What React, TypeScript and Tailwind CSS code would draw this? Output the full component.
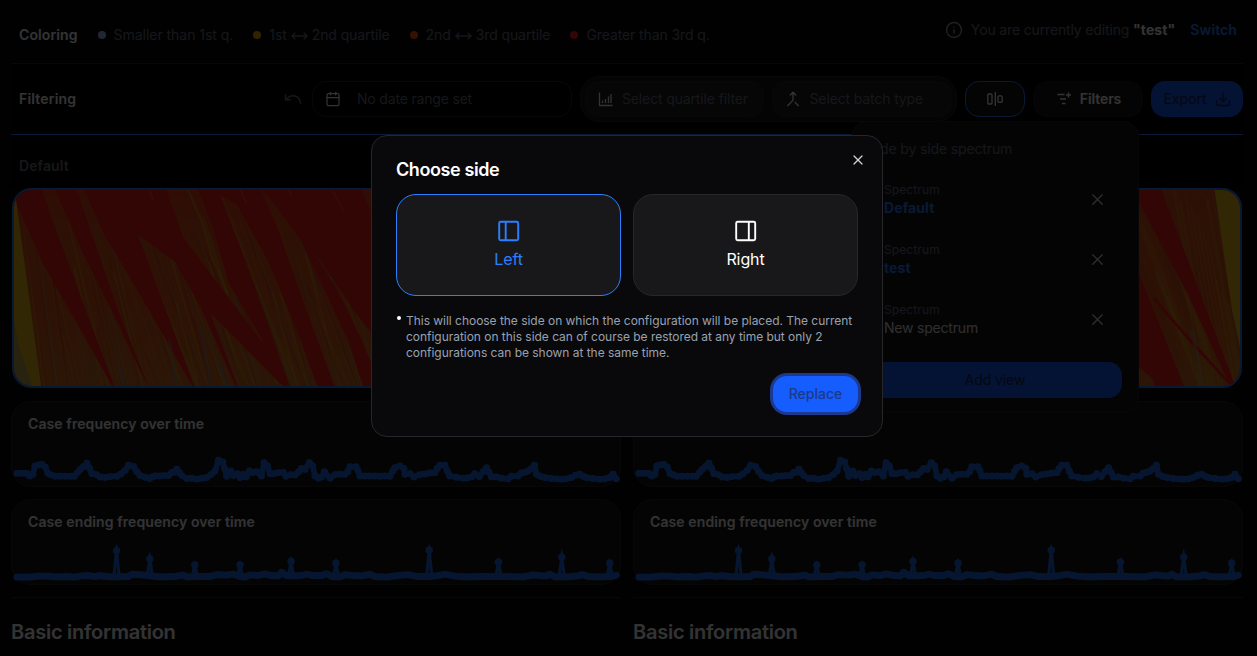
import React from "react";
import { Calendar, Info, Merge, Undo, X } from "lucide-react";

const frequency =
  "50,237 62,237 75,237 80,237 88,245 98,240 104,214 115,211 125,210 135,218 143,237 153,242 165,246 180,246 195,246 210,246 222,246 232,234 240,225 250,216 260,206 268,222 275,238 288,241 300,248 315,250 330,247 350,246 362,239 375,228 385,212 400,216 410,232 420,244 435,249 448,253 456,248 465,245 478,245 490,244 505,244 515,234 522,234 530,224 538,236 545,244 560,253 575,252 590,255 605,252 620,250 633,241 645,230 655,197 668,202 673,222 680,246 692,230 700,244 712,238 720,250 730,240 738,248 748,230 758,235 770,232 784,245 792,204 802,214 810,238 822,238 835,235 850,234 858,246 872,241 885,242 895,233 905,222 915,225 928,204 938,214 945,245 955,252 965,248 973,232 990,252 1005,241 1020,240 1035,240 1043,232 1050,217 1068,217 1074,229 1080,245 1095,245 1110,245 1125,245 1140,246 1155,245 1170,246 1178,231 1185,220 1200,214 1212,222 1215,240 1230,238 1242,248 1260,241 1275,239 1290,236 1305,235 1312,222 1320,212 1335,212 1342,230 1350,245 1370,249 1390,252 1402,251 1415,248 1425,238 1438,247 1450,232 1460,220 1468,234 1475,248 1490,248 1505,252 1525,254 1535,246 1555,245 1565,236 1575,234 1585,230 1595,222 1604,212 1610,240 1622,246 1635,250 1655,253 1670,254 1685,255 1700,254 1715,250 1728,243 1740,240 1750,246 1760,250 1780,253 1800,255 1815,254 1830,250 1840,240 1850,254";

const spikes: [number, number, number][] = [
  [349, 467, 445],
  [449, 493, 468],
  [584, 511, 496],
  [720, 511, 496],
  [873, 500, 483],
  [1008, 506, 489],
  [1288, 466, 445],
  [1496, 503, 486],
  [1686, 487, 460],
  [1830, 506, 489],
];

const baseline =
  "50,549 85,549 115,546 140,546 165,548 200,547 222,549 245,545 265,544 285,547 297,544 320,547 340,548 385,547 395,540 425,542 450,545 480,548 520,547 548,543 560,548 600,547 630,547 650,541 680,543 700,540 720,547 735,549 750,542 775,544 792,539 815,544 835,545 845,534 858,544 875,545 905,544 920,540 940,544 965,544 980,538 995,547 1020,548 1035,541 1060,544 1085,545 1108,540 1125,547 1160,549 1190,544 1225,541 1250,547 1285,547 1310,545 1335,540 1365,546 1400,548 1450,547 1500,547 1570,548 1600,542 1620,544 1640,546 1650,540 1665,548 1700,548 1735,545 1748,541 1765,547 1800,548 1835,547 1850,543";

function Chart({ title, kind }: { title: string; kind: "line" | "spikes" }) {
  return (
    <div className="relative h-[86px] flex-1 rounded-[20px] border border-zinc-800 bg-zinc-900 px-4 pt-3">
      <h3 className="text-sm leading-5 font-semibold tracking-[0.1px] text-white">{title}</h3>
      {kind === "line" ? (
        <svg className="absolute inset-0 h-full w-full" viewBox="35 18 1826 258" preserveAspectRatio="none">
          <polyline points={frequency} fill="none" stroke="#2571ee" strokeWidth="17" strokeLinejoin="round" strokeLinecap="round" />
          {frequency.split(" ").map((p, i) => (
            <circle key={i} cx={p.split(",")[0]} cy={p.split(",")[1]} r="10.5" fill="#2571ee" />
          ))}
        </svg>
      ) : (
        <svg className="absolute inset-0 h-full w-full" viewBox="35 312 1826 258" preserveAspectRatio="none">
          <polyline points={baseline} fill="none" stroke="#2571ee" strokeWidth="21" strokeLinejoin="round" strokeLinecap="round" />
          {spikes.map(([x, y, tip]) => (
            <g key={x} fill="#2571ee">
              <path d={`M${x - 8} 547L${x} ${y}L${x + 8} 547`} fill="none" stroke="#2571ee" strokeWidth="9" />
              <path d={`M${x} ${tip}L${x + 6} ${y}H${x - 6}Z`} />
              <circle cx={x} cy={y} r="11" />
            </g>
          ))}
        </svg>
      )}
    </div>
  );
}

const leftBands = [
  "16,203 42,262 113,388 42,388",
  "41,188 54,188 82,252 116,320 148,388 115,388 82,300",
  "76,188 83,188 104,235 133,283 193,388 149,388 118,310",
  "138,235 175,262 200,307 236,388 195,388",
  "210,313 284,388 238,388",
  "165,188 197,188 213,230 228,283 240,303 264,344 230,300 183,237",
  "220,196 236,204 267,260 300,340 317,388 290,388 245,260",
  "260,188 273,203 300,240 327,297 347,340 363,388 335,388 307,313 278,230",
  "310,247 333,280 353,310 376,340 376,376 360,337 337,290",
  "360,188 380,188 380,232",
];

const rightBands = [
  "1161,188 1215,188 1242,350 1242,388 1236,388",
  "1139,202 1187,293 1231,388 1185,388 1139,272",
  "1139,368 1152,378 1156,388 1139,388",
];

// [x at the top, y at the top, x at the bottom, y at the bottom, colour, opacity, width]
type Streak = [number, number, number, number, string, number, number];

const leftStreaks: Streak[] = Array.from({ length: 190 }, (_, i) => {
  const x = 18 + ((i * 67) % 351);
  const y = 192 + ((i * 43) % 160);
  const slope = x < 50 ? 0.14 : x < 110 ? 0.24 : 0.26 + ((i * 7) % 5) * 0.04;
  const colors = ["#e8b020", "#d01818", "#d9a81c", "#f02a1e", "#8f9a72", "#e0641e"];
  return [x, y, x + (388 - y) * slope, 388, colors[i % 6], 0.2 + (i % 3) * 0.09, 1 + (i % 3) * 0.7];
});

const rightStreaks: Streak[] = Array.from({ length: 56 }, (_, i) => {
  const x = 1125 + ((i * 29) % 114);
  const y = 188 + ((i * 41) % 120);
  const colors = ["#e8b020", "#c8541e", "#d6a51c"];
  return [x, y, x + (388 - y) * (x > 1170 ? 0.18 : 0.38), 388, colors[i % 3], 0.3, 1 + (i % 3)];
});

function Spectrum({ side }: { side: "left" | "right" }) {
  const left = side === "left";
  const bands = left ? leftBands : rightBands;
  const streaks = left ? leftStreaks : rightStreaks;
  return (
    <div className="h-[200px] flex-1 overflow-hidden rounded-[20px] border-2 border-blue-500">
      <svg className="h-full w-full" viewBox={left ? "14 190 604 196" : "636 190 604 196"} preserveAspectRatio="none">
        <defs>
          <clipPath id={`bands-${side}`}>
            {bands.map((b) => (
              <polygon key={b} points={b} />
            ))}
          </clipPath>
          <linearGradient id={`fade-${side}`} x1="0" y1="0" x2="0" y2="1">
            <stop offset="0" stopColor="#ff2020" stopOpacity={left ? "0.45" : "0.1"} />
            <stop offset="0.45" stopColor="#d7681f" stopOpacity="0" />
            <stop offset="1" stopColor="#c8a030" stopOpacity="0.35" />
          </linearGradient>
          <filter id={`soft-${side}`}>
            <feGaussianBlur stdDeviation="0.6" />
          </filter>
        </defs>
        <rect x="0" y="180" width="1257" height="220" fill="#ff2020" />
        <g filter={`url(#soft-${side})`}>
          <g clipPath={`url(#bands-${side})`}>
            <rect x="0" y="180" width="1257" height="220" fill="#e0561c" />
            {streaks.map(([x1, y1, x2, y2, c, o, w], i) => (
              <line key={i} x1={x1} y1={y1} x2={x2} y2={y2} stroke={c} strokeOpacity={o} strokeWidth={w} />
            ))}
            <rect x="0" y="188" width="1257" height="200" fill={`url(#fade-${side})`} />
          </g>
        </g>
        {left ? (
          <g filter="url(#soft-left)">
            <polygon points="10,198 16,200 42,392 10,392" fill="#f2c31c" />
            <polygon points="10,300 20,350 34,392 10,392" fill="#7d93a0" opacity="0.4" />
            <path d="M188 190L203 225L212 258L228 295" stroke="#d9a51f" strokeWidth="2" opacity="0.6" fill="none" />
            <path d="M169 340L176 386M200 325L211 386M218 360L226 386M118 365L124 388" stroke="#8290a0" strokeWidth="3" opacity="0.45" fill="none" />
            <path d="M331 188L343 212M240 190L246 203M288 190L291 195M149 190L153 200" stroke="#d9a51f" opacity="0.5" fill="none" />
          </g>
        ) : (
          <g filter="url(#soft-right)">
            <polygon points="1214,186 1246,186 1246,375 1232,310" fill="#f2c31c" />
            <path d="M1154 298Q1180 330 1232 386" stroke="#ff2020" strokeWidth="3" fill="none" />
            <path d="M1192 330L1203 386" stroke="#a09a88" strokeWidth="4" opacity="0.4" />
          </g>
        )}
      </svg>
    </div>
  );
}

function Legend({ color, children }: { color: string; children: React.ReactNode }) {
  return (
    <span className="flex items-center gap-2 whitespace-nowrap">
      <i className={`size-2 rounded-full ${color}`} />
      <span>{children}</span>
    </span>
  );
}

function BothWays() {
  return (
    <svg className="mx-1 -mt-px inline-block h-3 w-[17px]" viewBox="0 0 18 12" fill="none" stroke="currentColor" strokeWidth="1.4">
      <path d="M1 6h16M4.500 2.500L1 6l3.500 3.500M13.500 2.500L17 6l-3.500 3.500" />
    </svg>
  );
}

function ViewRow({ name, active }: { name: string; active?: boolean }) {
  return (
    <div className="flex h-[60px] items-center justify-between pr-[15px] pb-px pl-4">
      <div className="pt-px">
        <div className="text-xs leading-4 tracking-[0.1px] text-gray-500">Spectrum</div>
        <div className={active ? "text-sm leading-5 font-bold tracking-[0.1px] text-blue-500" : "text-sm leading-5 tracking-[-0.2px] text-zinc-200"}>{name}</div>
      </div>
      <X className="size-[19px] text-zinc-200" strokeWidth={1.6} />
    </div>
  );
}

export default function App() {
  return (
    <div className="relative h-[656px] w-full overflow-hidden bg-zinc-950 font-['Inter',sans-serif] text-sm text-white">
      <div className="mr-[14px] ml-[11px]">
        <header className="flex h-16 items-center border-b border-zinc-800 pl-2 text-gray-500">
          <div className="flex items-center pt-[7px]">
            <b className="mr-5 font-semibold tracking-[0.1px] text-white">Coloring</b>
            <div className="flex gap-5 tracking-[-0.1px]">
              <Legend color="bg-[#a0c4ff]"><span className="tracking-[-0.03px]">Smaller than 1st q.</span></Legend>
              <Legend color="bg-[#f0b100]">1st<BothWays />2nd quartile</Legend>
              <Legend color="bg-[#ff5a10]">2nd<BothWays />3rd quartile</Legend>
              <Legend color="bg-[#fb1c24]">Greater than 3rd q.</Legend>
            </div>
          </div>
          <div className="ml-auto flex items-center pr-[6px] pb-[4px]">
            <Info className="mr-2 size-[18px] text-zinc-400" strokeWidth={1.9} />
            <span className="tracking-[-0.15px]">You are currently editing <b className="font-bold tracking-[0.1px] text-white">"test"</b></span>
            <b className="ml-[15px] font-semibold tracking-[0.1px] text-blue-500">Switch</b>
          </div>
        </header>

        <section className="flex h-[71px] items-center border-b border-blue-500 bg-black pl-2">
          <b className="font-semibold tracking-[0.2px]">Filtering</b>
          <Undo className="mr-[9px] ml-auto size-5 text-gray-500" strokeWidth={1.8} />
          <div className="mr-2 flex h-9 w-[260px] items-center gap-4 rounded-[14px] border border-zinc-800 pl-3 tracking-[-0.18px] text-gray-500">
            <Calendar className="size-4 text-white" strokeWidth={1.8} />
            No date range set
          </div>
          <div className="mr-2 flex h-[46px] w-[377px] items-center gap-2 rounded-[20px] border border-zinc-800 bg-zinc-900 px-1 tracking-[-0.14px] text-gray-500">
            <div className="flex h-9 w-[180px] items-center gap-2 rounded-[14px] border border-zinc-800 bg-zinc-800/40 pl-3">
              <svg className="size-4 text-white" viewBox="0 0 16 16" fill="none" stroke="currentColor" strokeWidth="1.3">
                <path d="M1.500 1.500v13h13M4.500 12V9.500M7.500 12V8M10.500 12V5.500M13 12V3" />
              </svg>
              Select quartile filter
            </div>
            <div className="flex h-9 w-[182px] items-center gap-[9px] rounded-[14px] border border-zinc-800 bg-zinc-800/40 pl-3">
              <Merge className="size-4 text-white" strokeWidth={2} />
              Select batch type
            </div>
          </div>
          <div className="mr-2 flex h-9 w-[60px] items-center justify-center rounded-[14px] border border-blue-500 bg-zinc-900">
            <svg className="size-4" viewBox="0 0 16 16" fill="none" stroke="currentColor" strokeWidth="1.3">
              <rect x="0.800" y="3" width="4.200" height="10" rx="1" />
              <path d="M8.300 1v14" />
              <rect x="11" y="4.800" width="4.200" height="6.500" rx="1" />
            </svg>
          </div>
          <div className="mr-2 flex h-9 w-[110px] items-center justify-center gap-2 rounded-[14px] bg-zinc-900 pl-px font-semibold tracking-[-0.1px]">
            <svg className="size-4" viewBox="0 0 16 16" fill="none" stroke="currentColor" strokeWidth="1.4">
              <path d="M1.500 3.500h7M4 8h6M6 12.500h3.500M12.500 1.500v5M10 4h5" />
            </svg>
            Filters
          </div>
          <div className="flex h-9 w-[92px] items-center justify-center gap-2 rounded-[14px] bg-blue-600 text-blue-950">
            <span>Export</span>
            <svg className="size-4" viewBox="0 0 16 16" fill="none" stroke="currentColor" strokeWidth="1.3">
              <path d="M8 1v9M4.500 7L8 10.500 11.500 7M1.500 9v3.500a2 2 0 0 0 2 2h9a2 2 0 0 0 2-2V9" />
            </svg>
          </div>
        </section>

        <div className="flex h-[53px] items-center bg-black pt-2 pl-2 font-semibold tracking-[0.1px] text-zinc-500">Default</div>
        <div className="flex gap-3 pr-px pl-px">
          <Spectrum side="left" />
          <Spectrum side="right" />
        </div>
        <div className="mt-[13px] flex gap-3">
          <Chart title="Case frequency over time" kind="line" />
          <Chart title="Case frequency over time" kind="line" />
        </div>
        <div className="mt-3 flex gap-3">
          <Chart title="Case ending frequency over time" kind="spikes" />
          <Chart title="Case ending frequency over time" kind="spikes" />
        </div>
        <div className="mt-3 flex gap-3 text-xl font-semibold tracking-[-0.25px]">
          <h2 className="flex-1 border-t border-zinc-800 pt-5">Basic information</h2>
          <h2 className="flex-1 border-t border-zinc-800 pt-5">Basic information</h2>
        </div>
      </div>

      <div className="absolute top-[121px] left-[851px] h-[292px] w-[288px] rounded-[16px] border border-zinc-800 bg-zinc-900 px-4">
        <div className="flex h-[48px] items-center pt-[5px] tracking-[-0.14px] text-gray-500">Side by side spectrum</div>
        <ViewRow name="Default" active />
        <ViewRow name="test" active />
        <ViewRow name="New spectrum" />
        <div className="mt-3 flex h-9 items-center justify-center rounded-[14px] bg-blue-600 tracking-[-0.1px] text-blue-950">Add view</div>
      </div>

      <div className="absolute inset-0 bg-black/80" />

      <div className="absolute top-[135px] left-[371px] flex h-[302px] w-[512px] flex-col gap-4 rounded-[16px] border border-zinc-800 bg-zinc-950 p-6">
        <h1 className="pt-px text-lg leading-[17px] font-semibold tracking-[-0.4px]">Choose side</h1>
        <X className="absolute top-4 right-4 size-4 text-zinc-300" strokeWidth={1.9} />
        <div className="grid grid-cols-2 gap-3 text-center">
          <div className="flex h-[102px] flex-col items-center justify-center rounded-[20px] border border-blue-500 bg-zinc-900 text-blue-500">
            <svg className="size-6" viewBox="0 0 24 24" fill="none" stroke="currentColor" strokeWidth="1.9">
              <rect x="2.200" y="2.700" width="19" height="18.500" rx="1.500" />
              <path d="M8.700 3v18" />
            </svg>
            <span className="mt-1 text-base leading-6 tracking-[-0.1px]">Left</span>
          </div>
          <div className="flex h-[102px] flex-col items-center justify-center rounded-[20px] border border-zinc-800 bg-zinc-900">
            <svg className="size-6" viewBox="0 0 24 24" fill="none" stroke="currentColor" strokeWidth="1.9">
              <rect x="2.200" y="2.700" width="19" height="18.500" rx="1.500" />
              <path d="M14.800 3v18" />
            </svg>
            <span className="mt-1 text-base leading-6 tracking-[-0.1px]">Right</span>
          </div>
        </div>
        <div className="flex text-xs leading-4 tracking-[-0.03px] text-gray-400">
          <span className="mt-[4px] mr-[5px] ml-px size-1 shrink-0 rounded-full bg-white" />
          <p className="-mb-px pt-px whitespace-nowrap">
            This will choose the side on which the configuration will be placed. The current
            <br />configuration on this side can of course be restored at any time but only 2
            <br />configurations can be shown at the same time.
          </p>
        </div>
        <div className="flex h-9 w-[85px] shrink-0 items-center justify-center self-end rounded-[14px] bg-blue-600 font-medium text-blue-900 ring-3 ring-blue-900">Replace</div>
      </div>
    </div>
  );
}
